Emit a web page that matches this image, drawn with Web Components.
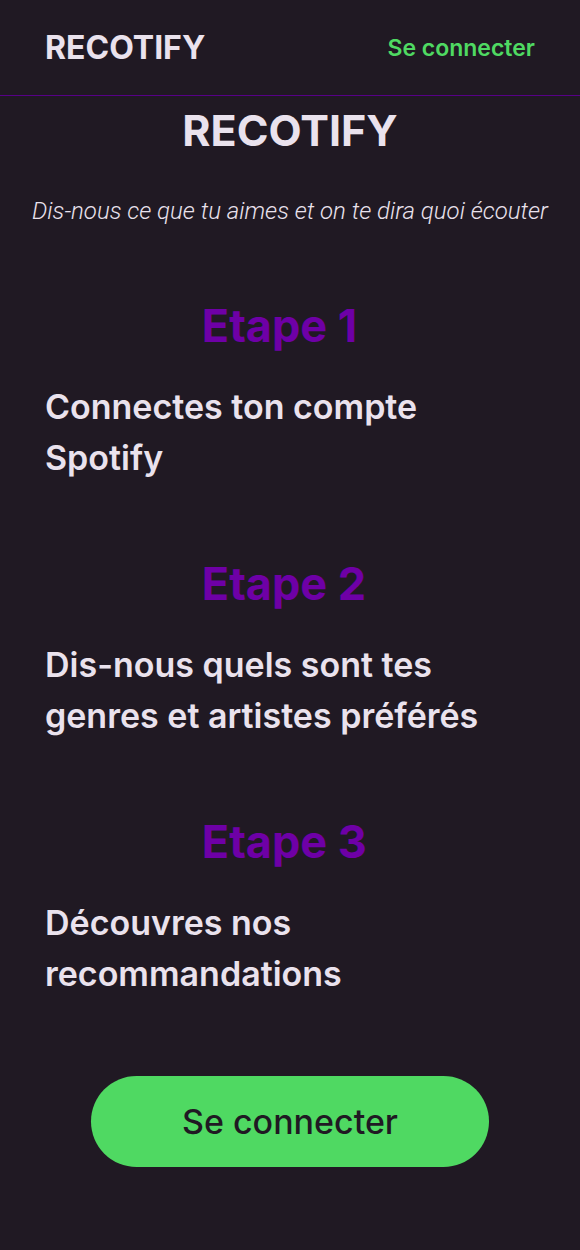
<!DOCTYPE html>
<html lang="fr">
<head>
<meta charset="utf-8">
<meta name="viewport" content="width=device-width, initial-scale=1">
<title>Recotify</title>
<style>
  :root {
    --bg: #201923;
    --text: #eae2ed;
    --purple: #6e00a6;
    --line: #570087;
    --green: #4fd962;
  }
  body {
    margin: 0;
    background: var(--bg);
    color: var(--text);
    font-family: Inter, "Open Sans", sans-serif;
  }
</style>
</head>
<body>
<recotify-app></recotify-app>

<template id="app-template">
  <style>
    :host { display: block; }
    main { display: flex; flex-direction: column; }
    .steps { display: flex; flex-direction: column; gap: 67px; padding: 64px 45px 0; }
    .action { display: flex; justify-content: center; padding: 77px 0 83px; }
  </style>
  <site-header></site-header>
  <main>
    <page-hero>
      <span slot="title">RECOTIFY</span>
      Dis-nous ce que tu aimes et on te dira quoi écouter
    </page-hero>
    <div class="steps">
      <step-card><span slot="title">Etape 1</span>Connectes ton compte Spotify</step-card>
      <step-card><span slot="title">Etape 2</span>Dis-nous quels sont tes genres et artistes préférés</step-card>
      <step-card><span slot="title">Etape 3</span>Découvres nos recommandations</step-card>
    </div>
    <div class="action"><connect-button>Se connecter</connect-button></div>
  </main>
</template>

<template id="header-template">
  <style>
    :host { display: block; border-bottom: 1px solid var(--line); }
    header { display: flex; align-items: center; justify-content: space-between; padding: 22px 45px; }
    a { text-decoration: none; color: inherit; }
    .logo { font-size: 32px; line-height: 51px; font-weight: 700; }
    .login { font-size: 23px; line-height: 34px; font-weight: 600; color: var(--green); }
  </style>
  <header>
    <a class="logo" href="#">RECOTIFY</a>
    <nav><a class="login" href="#connexion">Se connecter</a></nav>
  </header>
</template>

<template id="hero-template">
  <style>
    :host { display: block; text-align: center; }
    h1 { margin: 0; font-size: 43px; line-height: 68px; font-weight: 700; }
    p { margin: 30px 0 0; font-family: Roboto, sans-serif; font-size: 24px; line-height: 34px; font-style: italic; font-weight: 300; }
  </style>
  <h1><slot name="title"></slot></h1>
  <p><slot></slot></p>
</template>

<template id="step-template">
  <style>
    :host { display: block; }
    h2 { margin: 0; padding-left: 32%; font-size: 45px; line-height: 68px; font-weight: 700; color: var(--purple); }
    p { margin: 21px 0 0; font-size: 34px; line-height: 51px; font-weight: 600; }
  </style>
  <h2><slot name="title"></slot></h2>
  <p><slot></slot></p>
</template>

<template id="button-template">
  <style>
    :host { display: inline-block; }
    button {
      display: block; margin: 0; border: 0; border-radius: 46px; padding: 20px 91px;
      background: var(--green); color: var(--bg); cursor: pointer;
      font-family: inherit; font-size: 34px; line-height: 51px; font-weight: 500;
    }
  </style>
  <button type="button"><slot></slot></button>
</template>

<script>
  class TemplateElement extends HTMLElement {
    constructor() {
      super();
      const template = document.getElementById(this.constructor.template);
      this.attachShadow({ mode: "open" }).append(template.content.cloneNode(true));
    }
  }
  class SiteHeader extends TemplateElement { static template = "header-template"; }
  class PageHero extends TemplateElement { static template = "hero-template"; }
  class StepCard extends TemplateElement { static template = "step-template"; }
  class ConnectButton extends TemplateElement { static template = "button-template"; }
  class RecotifyApp extends TemplateElement { static template = "app-template"; }

  customElements.define("site-header", SiteHeader);
  customElements.define("page-hero", PageHero);
  customElements.define("step-card", StepCard);
  customElements.define("connect-button", ConnectButton);
  customElements.define("recotify-app", RecotifyApp);
</script>
</body>
</html>
